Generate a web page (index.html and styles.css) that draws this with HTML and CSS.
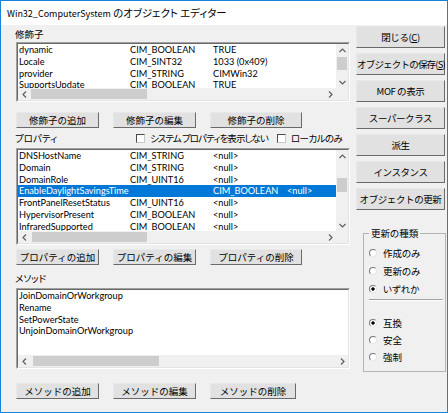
FILE: index.html
```html
<!DOCTYPE html>
<html lang="ja">
<head>
<meta charset="utf-8">
<link rel="stylesheet" href="styles.css">
</head>
<body>
<div class="win">
  <div class="titlebar"><span class="t-en">Win32_ComputerSystem</span> のオブジェクト エディター</div>
  <div class="main">
    <div class="left">
      <div class="label lbl-qual">修飾子</div>
      <div class="list list-qual">
        <div class="list-in">
          <div class="rows">
            <div class="row"><span class="c1">dynamic</span><span class="c2">CIM_BOOLEAN</span><span class="c3">TRUE</span></div>
            <div class="row"><span class="c1">Locale</span><span class="c2">CIM_SINT32</span><span class="c3">1033 (0x409)</span></div>
            <div class="row"><span class="c1">provider</span><span class="c2">CIM_STRING</span><span class="c3">CIMWin32</span></div>
            <div class="row"><span class="c1">SupportsUpdate</span><span class="c2">CIM_BOOLEAN</span><span class="c3">TRUE</span></div>
          </div>
          <div class="vscroll">
            <div class="arrow"><svg width="7" height="5" viewBox="0 0 7 5"><polyline points="0.5,4 3.5,1 6.5,4" fill="none" stroke="#606060" stroke-width="1.2"/></svg></div>
            <div class="vthumb vthumb-qual"></div>
            <div class="arrow arrow-end"><svg width="7" height="5" viewBox="0 0 7 5"><polyline points="0.5,1 3.5,4 6.5,1" fill="none" stroke="#606060" stroke-width="1.2"/></svg></div>
          </div>
          <div class="hscroll">
            <div class="arrow"><svg width="5" height="7" viewBox="0 0 5 7"><polyline points="4,0.5 1,3.5 4,6.5" fill="none" stroke="#606060" stroke-width="1.2"/></svg></div>
            <div class="hthumb hthumb-qual"></div>
            <div class="arrow arrow-end"><svg width="5" height="7" viewBox="0 0 5 7"><polyline points="1,0.5 4,3.5 1,6.5" fill="none" stroke="#606060" stroke-width="1.2"/></svg></div>
          </div>
          <div class="corner"></div>
        </div>
      </div>
      <div class="btnrow btnrow-qual">
        <button class="btn b1">修飾子の追加</button>
        <button class="btn b2">修飾子の編集</button>
        <button class="btn b3">修飾子の削除</button>
      </div>
      <div class="proprow">
        <span class="label lbl-prop">プロパティ</span>
        <span class="chk chk-sys"><span class="box"></span>システム プロパティを表示しない</span>
        <span class="chk"><span class="box"></span>ローカルのみ</span>
      </div>
      <div class="list list-prop">
        <div class="list-in">
          <div class="rows">
            <div class="row"><span class="c1">DNSHostName</span><span class="c2">CIM_STRING</span><span class="c3">&lt;null&gt;</span></div>
            <div class="row"><span class="c1">Domain</span><span class="c2">CIM_STRING</span><span class="c3">&lt;null&gt;</span></div>
            <div class="row"><span class="c1">DomainRole</span><span class="c2">CIM_UINT16</span><span class="c3">&lt;null&gt;</span></div>
            <div class="row sel"><span class="c1 wide">EnableDaylightSavingsTime</span><span class="c2 short">CIM_BOOLEAN</span><span class="c3">&lt;null&gt;</span></div>
            <div class="row"><span class="c1">FrontPanelResetStatus</span><span class="c2">CIM_UINT16</span><span class="c3">&lt;null&gt;</span></div>
            <div class="row"><span class="c1">HypervisorPresent</span><span class="c2">CIM_BOOLEAN</span><span class="c3">&lt;null&gt;</span></div>
            <div class="row"><span class="c1">InfraredSupported</span><span class="c2">CIM_BOOLEAN</span><span class="c3">&lt;null&gt;</span></div>
          </div>
          <div class="vscroll">
            <div class="arrow"><svg width="7" height="5" viewBox="0 0 7 5"><polyline points="0.5,4 3.5,1 6.5,4" fill="none" stroke="#606060" stroke-width="1.2"/></svg></div>
            <div class="vthumb vthumb-prop"></div>
            <div class="arrow arrow-end"><svg width="7" height="5" viewBox="0 0 7 5"><polyline points="0.5,1 3.5,4 6.5,1" fill="none" stroke="#606060" stroke-width="1.2"/></svg></div>
          </div>
          <div class="hscroll">
            <div class="arrow"><svg width="5" height="7" viewBox="0 0 5 7"><polyline points="4,0.5 1,3.5 4,6.5" fill="none" stroke="#606060" stroke-width="1.2"/></svg></div>
            <div class="hthumb hthumb-prop"></div>
            <div class="arrow arrow-end"><svg width="5" height="7" viewBox="0 0 5 7"><polyline points="1,0.5 4,3.5 1,6.5" fill="none" stroke="#606060" stroke-width="1.2"/></svg></div>
          </div>
          <div class="corner"></div>
        </div>
      </div>
      <div class="btnrow btnrow-prop">
        <button class="btn b1">プロパティの追加</button>
        <button class="btn b2">プロパティの編集</button>
        <button class="btn b3">プロパティの削除</button>
      </div>
      <div class="label lbl-meth">メソッド</div>
      <div class="list list-meth">
        <div class="list-in list-in-nov">
          <div class="rows">
            <div class="row">JoinDomainOrWorkgroup</div>
            <div class="row">Rename</div>
            <div class="row">SetPowerState</div>
            <div class="row">UnjoinDomainOrWorkgroup</div>
          </div>
          <div class="hscroll">
            <div class="arrow"><svg width="5" height="7" viewBox="0 0 5 7"><polyline points="4,0.5 1,3.5 4,6.5" fill="none" stroke="#606060" stroke-width="1.2"/></svg></div>
            <div class="hthumb hthumb-meth"></div>
            <div class="arrow arrow-end"><svg width="5" height="7" viewBox="0 0 5 7"><polyline points="1,0.5 4,3.5 1,6.5" fill="none" stroke="#606060" stroke-width="1.2"/></svg></div>
          </div>
        </div>
      </div>
      <div class="btnrow btnrow-meth">
        <button class="btn b1">メソッドの追加</button>
        <button class="btn b2">メソッドの編集</button>
        <button class="btn b3m">メソッドの削除</button>
      </div>
    </div>
    <div class="right">
      <button class="rbtn first">閉じる(<u>C</u>)</button>
      <button class="rbtn tight">オブジェクトの保存(<u>S</u>)</button>
      <button class="rbtn">MOF の表示</button>
      <button class="rbtn">スーパークラス</button>
      <button class="rbtn">派生</button>
      <button class="rbtn">インスタンス</button>
      <button class="rbtn">オブジェクトの更新</button>
      <fieldset class="group">
        <legend>更新の種類</legend>
        <div class="radio r18"><span class="rb"></span>作成のみ</div>
        <div class="radio r18"><span class="rb"></span>更新のみ</div>
        <div class="radio r18"><span class="rb on"></span>いずれか</div>
        <div class="sep"></div>
        <div class="radio r17"><span class="rb on"></span>互換</div>
        <div class="radio r17"><span class="rb"></span>安全</div>
        <div class="radio r17"><span class="rb"></span>強制</div>
      </fieldset>
    </div>
  </div>
</div>
</body>
</html>
```

FILE: styles.css
```css
html, body {
  margin: 0;
  padding: 0;
}
body {
  font-family: "Noto Sans CJK JP", "Noto Sans", sans-serif;
  font-size: 9.5px;
  font-feature-settings: "palt";
  color: #000;
  background: #f0f0f0;
}
.win {
  width: 448px;
  height: 413px;
  box-sizing: border-box;
  border: 1px solid #1883d7;
  background: #f0f0f0;
  display: flex;
  flex-direction: column;
  overflow: hidden;
}
.titlebar {
  height: 24px;
  flex: none;
  background: #fff;
  padding-left: 6px;
  font-size: 10.4px;
  line-height: 24px;
  white-space: nowrap;
}
.t-en {
  font-size: 9px;
}
.main {
  display: flex;
  flex: 1;
}
.left {
  width: 334px;
  margin-left: 15px;
  display: flex;
  flex-direction: column;
}
.right {
  width: 89px;
  margin-left: 6px;
  display: flex;
  flex-direction: column;
}
.label {
  line-height: 12px;
  margin-left: -1px;
  white-space: nowrap;
}
.lbl-qual { margin-top: 3px; }
.lbl-meth { margin-top: 7px; }

.list {
  box-sizing: border-box;
  border: 1px solid;
  border-color: #a0a0a0 #ffffff #ffffff #a0a0a0;
}
.list-qual { margin-top: 2px; height: 60px; }
.list-prop { margin-top: 4px; height: 97px; }
.list-meth { margin-top: 4px; height: 81px; }
.list-in {
  box-sizing: border-box;
  height: 100%;
  border: 1px solid;
  border-color: #696969 #e3e3e3 #e3e3e3 #696969;
  background: #fff;
  display: grid;
  grid-template-columns: 1fr 12px;
  grid-template-rows: 1fr 12px;
  font-family: Lato, "Noto Sans", sans-serif;
  font-size: 9.2px;
}
.list-in-nov {
  grid-template-columns: 1fr;
}
.rows {
  overflow: hidden;
  min-width: 0;
}
.row {
  display: flex;
  height: 11.75px;
  line-height: 11.75px;
  padding-left: 1px;
  white-space: nowrap;
}
.row.sel {
  background: #0078d7;
  color: #fff;
}
.c1 { width: 111px; flex: none; }
.c2 { width: 83px; flex: none; }
.c1.wide { width: 194px; }
.c2.short { width: 74px; }

.vscroll {
  background: #f0f0f0;
  display: flex;
  flex-direction: column;
}
.arrow {
  width: 12px;
  height: 12px;
  flex: none;
  display: flex;
  align-items: center;
  justify-content: center;
}
.vthumb {
  background: #cdcdcd;
  margin: 0 1px;
  flex: none;
}
.vthumb-qual { margin-top: 1px; height: 13px; }
.vthumb-prop { margin-top: 16px; height: 14px; }
.vscroll .arrow-end { margin-top: auto; }
.hscroll {
  background: #f0f0f0;
  display: flex;
}
.hscroll .arrow-end { margin-left: auto; }
.hthumb {
  background: #cdcdcd;
  margin: 1px 0;
  flex: none;
}
.hthumb-qual { margin-left: 1px; width: 116px; }
.hthumb-prop { margin-left: 2px; width: 115px; }
.hthumb-meth { margin-left: 3px; width: 126px; }
.corner { background: #f0f0f0; }

.btnrow {
  display: flex;
  gap: 14px;
}
.btnrow-qual { margin-top: 10px; }
.btnrow-prop { margin-top: 4px; }
.btnrow-meth { margin-top: 14px; }
.btn, .rbtn {
  box-sizing: border-box;
  border: 1px solid;
  border-color: #e8e8e8 #6a6a6a #6a6a6a #e8e8e8;
  background: #e1e1e1;
  font-family: inherit;
  font-size: 9.5px;
  color: #000;
  padding: 0;
  margin: 0;
  white-space: nowrap;
  text-align: center;
}
.btn {
  height: 16px;
  line-height: 14px;
}
.b1, .b2 { width: 83px; }
.b3 { width: 92px; }
.b3m { width: 86px; }

.proprow {
  display: flex;
  align-items: center;
  height: 12px;
  margin-top: 4px;
  white-space: nowrap;
}
.lbl-prop { width: 121px; flex: none; }
.chk {
  display: flex;
  align-items: center;
  letter-spacing: -0.6px;
}
.chk-sys { width: 141px; flex: none; letter-spacing: -0.95px; }
.box {
  width: 9px;
  height: 9px;
  box-sizing: border-box;
  border: 1px solid;
  border-color: #4a4a4a #c8c8c8 #c8c8c8 #4a4a4a;
  background: #fff;
  margin-right: 5px;
  flex: none;
}

.rbtn {
  width: 89px;
  height: 22px;
  line-height: 20px;
  margin-top: 5px;
  letter-spacing: -0.4px;
}
.rbtn.tight { letter-spacing: -0.8px; }
.rbtn.first { margin-top: 1px; }
.rbtn u { text-decoration: underline; }

.group {
  margin: 17px 0 0 7px;
  width: 83px;
  box-sizing: border-box;
  border: 1px solid #b4b4b4;
  padding: 0 0 6px 5px;
  min-width: 0;
}
.group legend {
  padding: 0 2px;
  line-height: 12px;
}
.radio {
  display: flex;
  align-items: center;
  white-space: nowrap;
}
.r18 { height: 18px; }
.r18:first-of-type { margin-top: 5px; }
.r17 { height: 17px; }
.rb {
  width: 8px;
  height: 8px;
  box-sizing: border-box;
  border: 1px solid;
  border-color: #7a7a7a #e6e6e6 #e6e6e6 #7a7a7a;
  border-radius: 50%;
  background: #fff;
  margin-right: 6px;
  flex: none;
}
.rb.on {
  background: radial-gradient(circle, #000 0, #000 1.4px, #fff 1.9px);
}
.sep {
  height: 0;
  border-top: 1px solid #a0a0a0;
  border-bottom: 1px solid #fff;
  margin: 1px 2px 13px 0;
}
```
